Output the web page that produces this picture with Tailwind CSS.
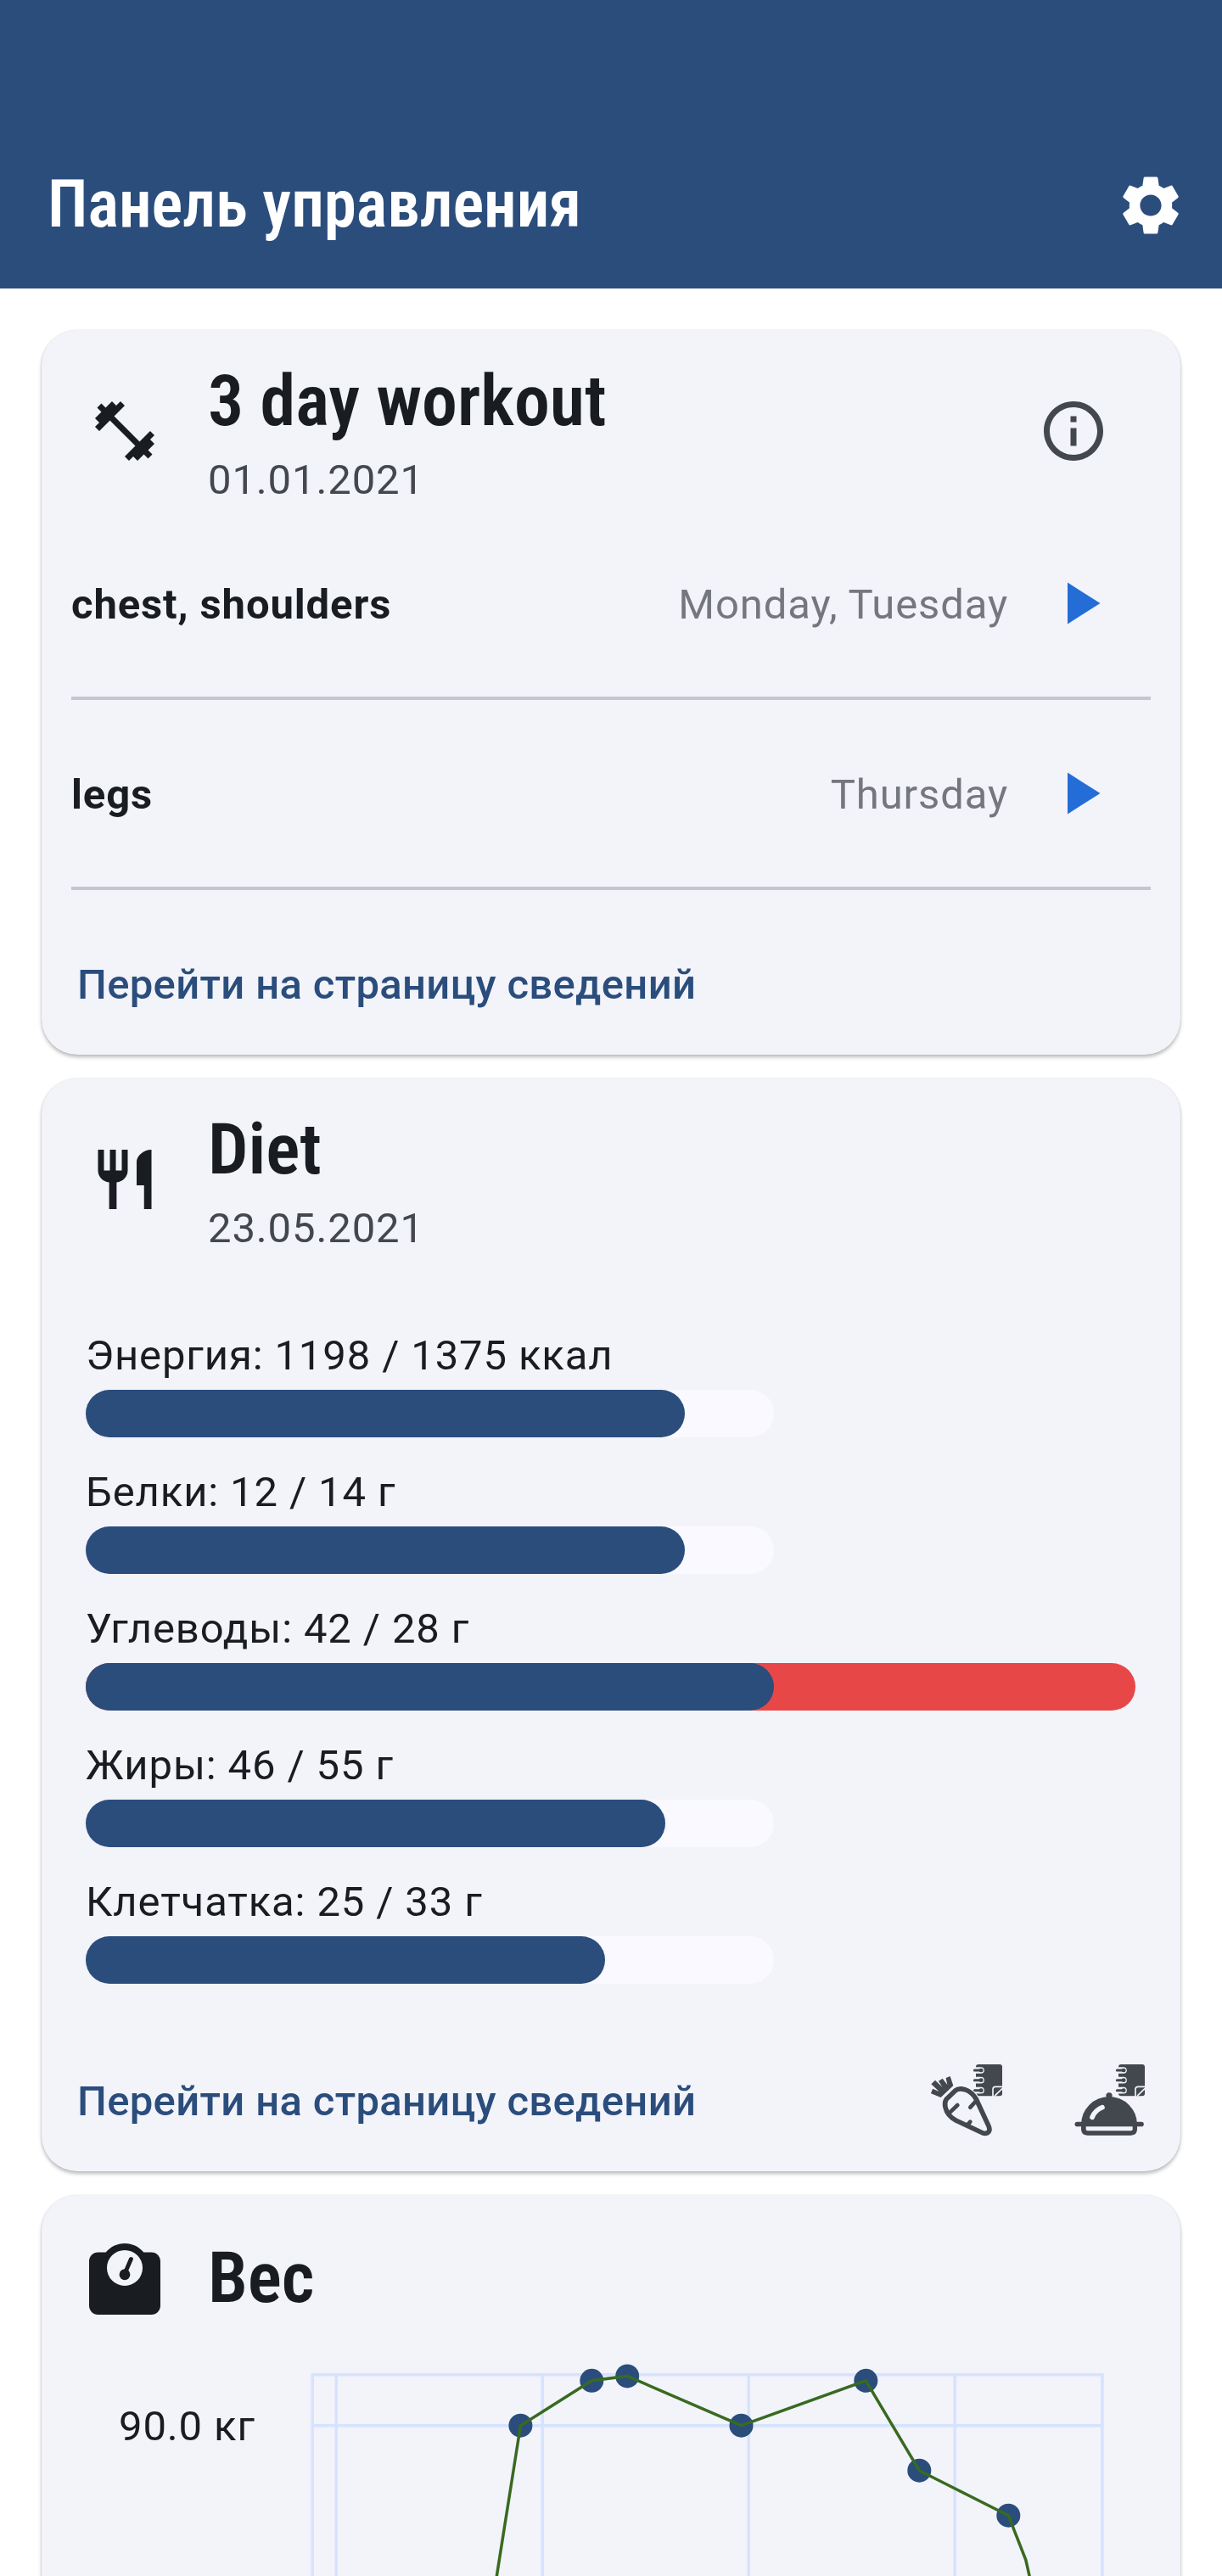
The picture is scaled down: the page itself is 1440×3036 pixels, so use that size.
<!DOCTYPE html>
<html lang="ru">
<head>
<meta charset="utf-8">
<title>Панель управления</title>
<script src="https://cdn.jsdelivr.net/npm/@tailwindcss/browser@4"></script>
</head>
<body class="bg-white font-['Roboto',sans-serif] text-[49px] leading-[70px] tracking-[0.875px] text-[#191c20]">
<div class="h-[3036px] overflow-hidden">
  <header class="flex h-[340px] items-end bg-[#2a4d7c] text-white">
    <div class="flex h-[196px] w-full items-center justify-between pr-[42px] pl-[56px]">
      <h1 class="pb-[3px] font-['Roboto_Condensed','Roboto',sans-serif] text-[77px] leading-[98px] font-semibold tracking-normal [font-stretch:75%]">Панель управления</h1>
      <svg class="size-[84px]" viewBox="0 0 24 24" fill="currentColor"><path d="M19.14 12.94c.04-.3.06-.61.06-.94 0-.32-.02-.64-.07-.94l2.03-1.58c.18-.14.23-.41.12-.61l-1.92-3.32c-.12-.22-.37-.29-.59-.22l-2.39.96c-.5-.38-1.03-.7-1.62-.94l-.36-2.54c-.04-.24-.24-.41-.48-.41h-3.84c-.24 0-.43.17-.47.41l-.36 2.54c-.59.24-1.13.57-1.62.94l-2.39-.96c-.22-.08-.47 0-.59.22L2.74 8.87c-.12.21-.08.47.12.61l2.03 1.58c-.05.3-.09.63-.09.94s.02.64.07.94l-2.03 1.58c-.18.14-.23.41-.12.61l1.92 3.32c.12.22.37.29.59.22l2.39-.96c.5.38 1.03.7 1.62.94l.36 2.54c.05.24.24.41.48.41h3.84c.24 0 .44-.17.47-.41l.36-2.54c.59-.24 1.13-.56 1.62-.94l2.39.96c.22.08.47 0 .59-.22l1.92-3.32c.12-.22.07-.47-.12-.61l-2.01-1.58zM12 15.6c-1.98 0-3.6-1.62-3.6-3.6s1.62-3.6 3.6-3.6 3.6 1.62 3.6 3.6-1.62 3.6-3.6 3.6z"/></svg>
    </div>
  </header>

  <main class="flex flex-col gap-[28px] px-[49px] pt-[49px]">
    <!-- Workout -->
    <section class="flex h-[854px] flex-col rounded-[42px] bg-[#f3f3fa] shadow-[0_3px_4px_rgba(0,0,0,0.26),0_0_2px_rgba(0,0,0,0.12)]">
      <div class="flex h-[238px] items-center gap-[56px] pr-[84px] pl-[56px]">
        <svg class="size-[84px] shrink-0" viewBox="0 0 24 24" fill="currentColor"><path d="M20.57 14.86L22 13.43 20.57 12 17 15.57 8.43 7 12 3.43 10.57 2 9.14 3.43 7.71 2 5.57 4.14 4.14 2.71 2.71 4.14l1.43 1.43L2 7.71l1.43 1.43L2 10.57 3.43 12 7 8.43 15.57 17 12 20.57 13.43 22l1.43-1.43L16.29 22l2.14-2.14 1.43 1.43 1.43-1.43-1.43-1.43L22 16.29z"/></svg>
        <div class="flex-1">
          <h2 class="font-['Roboto_Condensed','Roboto',sans-serif] text-[84px] leading-[112px] font-semibold tracking-normal [font-stretch:75%]">3 day workout</h2>
          <p class="-mb-[3px] leading-[73px] text-[#43474e]">01.01.2021</p>
        </div>
        <svg class="size-[84px] shrink-0 text-[#43474e]" viewBox="0 0 24 24" fill="currentColor"><path d="M11 7h2v2h-2zm0 4h2v6h-2zm1-9C6.48 2 2 6.48 2 12s4.480 10 10 10 10-4.480 10-10S17.520 2 12 2zm0 18c-4.410 0-8-3.590-8-8s3.590-8 8-8 8 3.590 8 8-3.590 8-8 8z"/></svg>
      </div>
      <div class="px-[35px]">
        <div class="flex h-[168px] items-center">
          <span class="flex-1 pt-[3px] font-bold">chest, shoulders</span>
          <span class="pt-[3px] text-[#75777f]">Monday, Tuesday</span>
          <span class="flex w-[168px] justify-center"><svg class="size-[84px] text-[#256dd6]" viewBox="0 0 24 24" fill="currentColor"><path d="M8 5v14l11-7z"/></svg></span>
        </div>
        <div class="flex h-[56px] items-center"><div class="h-[4px] w-full bg-[#c4c6d0]"></div></div>
        <div class="flex h-[168px] items-center">
          <span class="flex-1 pt-[3px] font-bold">legs</span>
          <span class="pt-[3px] text-[#75777f]">Thursday</span>
          <span class="flex w-[168px] justify-center"><svg class="size-[84px] text-[#256dd6]" viewBox="0 0 24 24" fill="currentColor"><path d="M8 5v14l11-7z"/></svg></span>
        </div>
        <div class="flex h-[56px] items-center"><div class="h-[4px] w-full bg-[#c4c6d0]"></div></div>
      </div>
      <a class="flex h-[168px] items-center pt-[3px] pl-[42px] font-medium tracking-[0.35px] text-[#2a4d7c]">Перейти на страницу сведений</a>
    </section>

    <!-- Diet -->
    <section class="flex h-[1288px] flex-col rounded-[42px] bg-[#f3f3fa] shadow-[0_3px_4px_rgba(0,0,0,0.26),0_0_2px_rgba(0,0,0,0.12)]">
      <div class="flex h-[238px] items-center gap-[56px] pr-[84px] pl-[56px]">
        <svg class="size-[84px] shrink-0" viewBox="0 0 24 24" fill="currentColor"><path d="M11 9H9V2H7v7H5V2H3v7c0 2.12 1.66 3.84 3.75 3.97V22h2.5v-9.03C11.34 12.84 13 11.12 13 9V2h-2v7zm5-3v8h2.500v8H21V2c-2.760 0-5 2.240-5 4z"/></svg>
        <div class="flex-1">
          <h2 class="font-['Roboto_Condensed','Roboto',sans-serif] text-[84px] leading-[112px] font-semibold tracking-normal [font-stretch:75%]">Diet</h2>
          <p class="-mb-[3px] leading-[73px] text-[#43474e]">23.05.2021</p>
        </div>
      </div>
      <div class="flex flex-1 flex-col gap-[29.5px] pt-[53.5px] pl-[52px]">
        <div class="flex flex-col gap-[5.5px]">
          <p>Энергия: 1198 / 1375 ккал</p>
          <div class="h-[56px] w-[810.5px] rounded-full bg-[#f9f9ff]"><div class="h-full rounded-full bg-[#2a4d7c]" style="width:706px"></div></div>
        </div>
        <div class="flex flex-col gap-[5.5px]">
          <p>Белки: 12 / 14 г</p>
          <div class="h-[56px] w-[810.5px] rounded-full bg-[#f9f9ff]"><div class="h-full rounded-full bg-[#2a4d7c]" style="width:706px"></div></div>
        </div>
        <div class="flex flex-col gap-[5.5px]">
          <p>Углеводы: 42 / 28 г</p>
          <div class="h-[56px] w-[1237px] rounded-full bg-[#e84748]"><div class="h-full rounded-full bg-[#2a4d7c]" style="width:810.5px"></div></div>
        </div>
        <div class="flex flex-col gap-[5.5px]">
          <p>Жиры: 46 / 55 г</p>
          <div class="h-[56px] w-[810.5px] rounded-full bg-[#f9f9ff]"><div class="h-full rounded-full bg-[#2a4d7c]" style="width:683px"></div></div>
        </div>
        <div class="flex flex-col gap-[5.5px]">
          <p>Клетчатка: 25 / 33 г</p>
          <div class="h-[56px] w-[810.5px] rounded-full bg-[#f9f9ff]"><div class="h-full rounded-full bg-[#2a4d7c]" style="width:612px"></div></div>
        </div>
      </div>
      <div class="flex h-[168px] items-center pl-[42px]">
        <a class="flex-1 pt-[3px] font-medium tracking-[0.35px] text-[#2a4d7c]">Перейти на страницу сведений</a>
        <span class="flex w-[168px] justify-center">
          <svg class="size-[84px] overflow-visible text-[#43474e]" viewBox="0 0 252 252" fill="none" stroke-linecap="round" stroke-linejoin="round">
            <rect x="159" width="93" height="112" rx="9" fill="currentColor"/>
            <path d="M158 21h19M158 56h19M158 92h19" stroke="#f3f3fa" stroke-width="23"/>
            <path d="M154 21h22M154 56h22M154 92h22" stroke="currentColor" stroke-width="9"/>
            <path d="M177 21h1M177 56h1M177 92h1" stroke="currentColor" stroke-width="14"/>
            <path d="M219 114V88q0-9 9-9h26M227 110l25-24" stroke="#f3f3fa" stroke-width="5"/>
            <path d="M54 124L86 93q12-10 34-4q26 9 40 34l44 95q6 14 0 21t-20 4L88 198Q58 182 51 152q-4-16 3-28z" fill="#f3f3fa" stroke="#f3f3fa" stroke-width="24"/>
            <path d="M54 124L86 93q12-10 34-4q26 9 40 34l44 95q6 14 0 21t-20 4L88 198Q58 182 51 152q-4-16 3-28z" stroke="currentColor" stroke-width="17"/>
            <path d="M94 144l-27 26M159 130l-20 22M139 203l-11 12" stroke="currentColor" stroke-width="14"/>
            <path d="M35 117L0 103l6-17l23 10L1 70l14-14l25 24L27 59l14-9l17 22l-5-24l15-6l11 33z" fill="currentColor"/>
          </svg>
        </span>
        <span class="flex w-[168px] justify-center">
          <svg class="size-[84px] overflow-visible text-[#43474e]" viewBox="0 0 252 252" fill="none" stroke-linecap="round" stroke-linejoin="round">
            <rect x="159" width="93" height="112" rx="9" fill="currentColor"/>
            <path d="M158 21h19M158 56h19M158 92h19" stroke="#f3f3fa" stroke-width="23"/>
            <path d="M154 21h22M154 56h22M154 92h22" stroke="currentColor" stroke-width="9"/>
            <path d="M177 21h1M177 56h1M177 92h1" stroke="currentColor" stroke-width="14"/>
            <path d="M219 114V88q0-9 9-9h26M227 110l25-24" stroke="#f3f3fa" stroke-width="5"/>
            <circle cx="126" cy="111" r="11" fill="currentColor"/>
            <path d="M27 213a99 99 0 0 1 198 0v16q0 22-22 22H49q-22 0-22-22z" fill="currentColor"/>
            <path d="M13 211.500h227" stroke="currentColor" stroke-width="17"/>
            <path d="M44 220h165v9q0 6-6 6H50q-6 0-6-6z" fill="#f3f3fa"/>
            <path d="M66 187q10-25 36-35" stroke="#f3f3fa" stroke-width="17"/>
          </svg>
        </span>
      </div>
    </section>

    <!-- Weight -->
    <section class="flex h-[900px] shrink-0 flex-col rounded-[42px] bg-[#f3f3fa] shadow-[0_3px_4px_rgba(0,0,0,0.26),0_0_2px_rgba(0,0,0,0.12)]">
      <div class="flex h-[198px] items-center gap-[56px] pl-[56px]">
        <svg class="size-[84px] shrink-0" viewBox="0 0 512 512" fill="currentColor">
          <path fill-rule="evenodd" d="M392 64C359.500 25 311 0 256 0S152.500 25 120 64H64C28.700 64 0 92.700 0 128v320c0 35.300 28.700 64 64 64h384c35.300 0 64-28.700 64-64V128c0-35.300-28.700-64-64-64zM256 48a128 128 0 1 1 0 256a128 128 0 1 1 0-256z"/>
          <circle cx="256" cy="224" r="39"/>
          <path d="M260 208l41-95" stroke="currentColor" stroke-width="30" stroke-linecap="round"/>
        </svg>
        <h2 class="pb-[3px] font-['Roboto_Condensed','Roboto',sans-serif] text-[84px] leading-[112px] font-semibold tracking-normal [font-stretch:75%]">Вес</h2>
      </div>
      <div class="flex">
        <div class="w-[317px] pt-[40px] pl-[91px]">90.0 кг</div>
        <svg class="h-[251px] w-[936px]" viewBox="366 2785 936 251" fill="none">
          <g stroke="#d5e3ff" stroke-width="3.500">
            <path d="M396.200 2799v300M639.300 2799v300M882.200 2799v300M1125.200 2799v300M368 2858.700h931"/>
            <path d="M368.200 3100V2798.700h930.700V3100"/>
          </g>
          <g fill="#2a4d7c">
            <circle cx="613.400" cy="2858.700" r="14"/>
            <circle cx="697.300" cy="2805.800" r="14"/>
            <circle cx="739.200" cy="2800.400" r="14"/>
            <circle cx="873.500" cy="2858.700" r="14"/>
            <circle cx="1020.300" cy="2805.800" r="14"/>
            <circle cx="1083.300" cy="2911.700" r="14"/>
            <circle cx="1188.300" cy="2964.700" r="14"/>
          </g>
          <path d="M584.700 3040L613.400 2858.700L697.300 2805.800L739.200 2800.400L873.500 2858.700L1020.300 2805.800L1083.300 2911.700L1188.300 2964.700L1208.800 3017L1214 3040" stroke="#386a20" stroke-width="3.500"/>
        </svg>
      </div>
    </section>
  </main>
</div>
</body>
</html>
